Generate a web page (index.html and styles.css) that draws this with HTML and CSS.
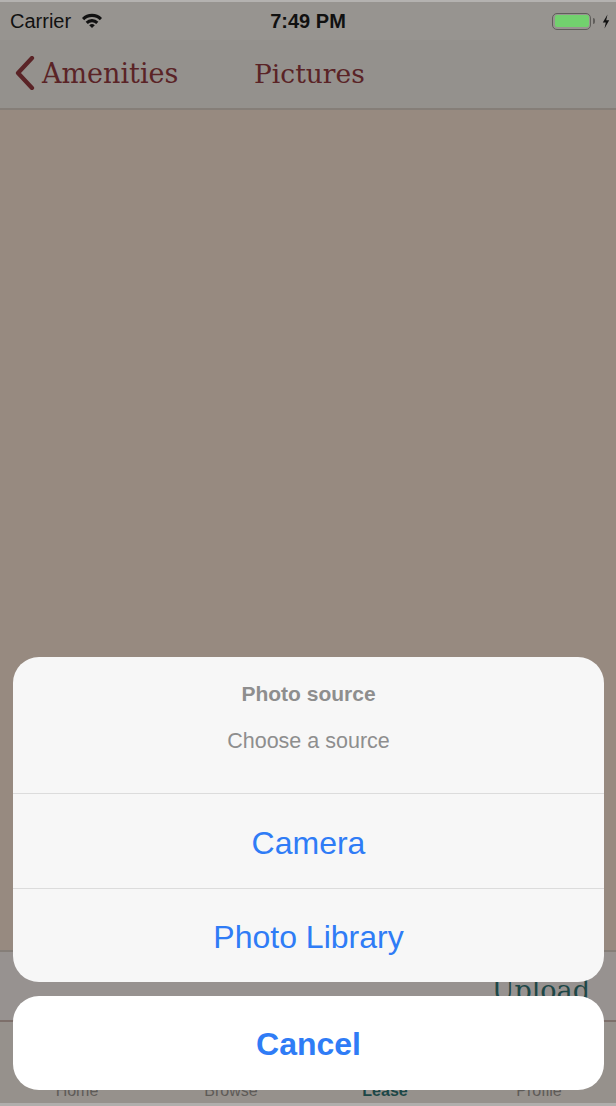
FILE: index.html
```html
<!DOCTYPE html>
<html>
<head>
<meta charset="utf-8">
<link rel="stylesheet" href="styles.css">
</head>
<body>
<div class="screen">
  <div class="statusbar">
    <div class="sb-left">
      <span class="carrier">Carrier</span>
      <svg class="wifi" width="22" height="17" viewBox="0 0 22 16">
        <path d="M1 5.5 A14 14 0 0 1 21 5.5 L18.8 7.8 A11 11 0 0 0 3.2 7.8 Z" fill="#111"/>
        <path d="M4.6 9.2 A9 9 0 0 1 17.4 9.2 L15.2 11.4 A6 6 0 0 0 6.8 11.4 Z" fill="#111"/>
        <path d="M8.2 12.8 A4 4 0 0 1 13.8 12.8 L11 15.6 Z" fill="#111"/>
      </svg>
    </div>
    <div class="time">7:49 PM</div>
    <div class="sb-right">
      <div class="battery"><div class="level"></div></div>
      <div class="nub"></div>
      <svg class="bolt" width="8" height="15" viewBox="0 0 8 14"><path d="M5.5 0 L0.8 8 L3.8 8 L2.5 14 L7.2 5.8 L4.2 5.8 Z" fill="#111"/></svg>
    </div>
  </div>
  <div class="navbar">
    <div class="back">
      <svg width="22" height="34" viewBox="0 0 22 34"><path d="M18 2 L4 17 L18 32" fill="none" stroke="#5a2326" stroke-width="4.2" stroke-linecap="round" stroke-linejoin="round"/></svg>
      <span>Amenities</span>
    </div>
    <div class="title">Pictures</div>
  </div>
  <div class="content"></div>
  <div class="uploadbar"><span class="upload">Upload</span></div>
  <div class="tabbar">
    <span class="tab">Home</span>
    <span class="tab">Browse</span>
    <span class="tab active">Lease</span>
    <span class="tab">Profile</span>
  </div>

  <div class="sheet">
    <div class="group">
      <div class="header">
        <div class="h-title">Photo source</div>
        <div class="h-msg">Choose a source</div>
      </div>
      <div class="action">Camera</div>
      <div class="action">Photo Library</div>
    </div>
    <div class="cancel">Cancel</div>
  </div>
</div>
</body>
</html>
```
FILE: styles.css
```css
html, body {
  margin: 0;
  padding: 0;
}
body {
  width: 616px;
  height: 1106px;
  overflow: hidden;
  font-family: "Liberation Sans", Arial, sans-serif;
}
.screen {
  position: relative;
  width: 616px;
  height: 1106px;
  display: flex;
  flex-direction: column;
  background: #96918c;
}
.statusbar {
  height: 40px;
  background: #979490;
  display: flex;
  align-items: center;
  justify-content: space-between;
  padding: 0 6px 0 10px;
  box-sizing: border-box;
  position: relative;
  border-top: 2px solid #b4b2b0;
}
.sb-left {
  display: flex;
  align-items: center;
  gap: 10px;
}
.carrier {
  font-size: 20px;
  color: #111;
}
.wifi {
  margin-top: -2px;
}
.time {
  position: absolute;
  left: 0;
  right: 0;
  text-align: center;
  font-size: 20px;
  font-weight: 600;
  color: #111;
  pointer-events: none;
}
.sb-right {
  display: flex;
  align-items: center;
  gap: 2px;
}
.battery {
  width: 39px;
  height: 17px;
  border: 1.5px solid #5f5d5a;
  border-radius: 5px;
  padding: 1.5px;
  box-sizing: border-box;
  display: flex;
}
.level {
  flex: 1;
  background: #72d16e;
  border-radius: 2px;
}
.nub {
  width: 2px;
  height: 6px;
  background: #5f5d5a;
  border-radius: 0 2px 2px 0;
  margin-right: 5px;
}
.navbar {
  height: 68px;
  background: #94918d;
  border-bottom: 2px solid #857e78;
  position: relative;
  display: flex;
  align-items: center;
  padding-left: 14px;
}
.back {
  display: flex;
  align-items: center;
  gap: 6px;
  color: #5a2326;
  font-family: "DejaVu Serif", "Liberation Serif", serif;
  font-size: 27px;
  margin-top: -2px;
}
.back svg {
  flex: none;
}
.title {
  position: absolute;
  left: 254px;
  top: 0;
  bottom: 0;
  display: flex;
  align-items: center;
  color: #5a2326;
  font-family: "DejaVu Serif", "Liberation Serif", serif;
  font-size: 26.5px;
  margin-top: -2px;
}
.content {
  flex: 1;
  background: #978a80;
  border-bottom: 2px solid #857e78;
}
.uploadbar {
  height: 68px;
  background: #979290;
  border-bottom: 2px solid #7d6f6a;
  display: flex;
  align-items: flex-end;
  justify-content: flex-end;
  padding-right: 26px;
}
.upload {
  font-family: "DejaVu Serif", "Liberation Serif", serif;
  font-size: 27px;
  color: #1d4747;
  margin-bottom: 14px;
}
.tabbar {
  height: 84px;
  background: #96918c;
  display: flex;
  align-items: flex-end;
  padding-bottom: 3px;
  box-sizing: border-box;
  border-bottom: 3px solid #b0aeac;
}
.tab {
  flex: 1;
  text-align: center;
  font-size: 16px;
  color: #5e5b58;
  line-height: 18px;
}
.tab.active {
  color: #1d4747;
  font-weight: 600;
}
.sheet {
  position: absolute;
  left: 13px;
  right: 12px;
  top: 657px;
  display: flex;
  flex-direction: column;
  gap: 14px;
}
.group {
  background: #f7f7f7;
  border-radius: 26px;
  overflow: hidden;
}
.header {
  height: 137px;
  display: flex;
  flex-direction: column;
  align-items: center;
  padding-top: 25px;
  box-sizing: border-box;
  border-bottom: 1px solid #dcdcdc;
}
.h-title {
  font-size: 21px;
  font-weight: 700;
  color: #8e8e8e;
  line-height: 24px;
}
.h-msg {
  font-size: 21.5px;
  color: #8e8e8e;
  line-height: 24px;
  margin-top: 23px;
}
.action {
  height: 94px;
  display: flex;
  align-items: center;
  justify-content: center;
  font-size: 32px;
  color: #2f7cf6;
  padding-top: 4px;
  box-sizing: border-box;
}
.action + .action {
  border-top: 1px solid #dcdcdc;
}
.cancel {
  height: 94px;
  background: #ffffff;
  border-radius: 26px;
  display: flex;
  align-items: center;
  justify-content: center;
  font-size: 32px;
  font-weight: 700;
  color: #2f7cf6;
  padding-top: 2px;
  box-sizing: border-box;
}
```
